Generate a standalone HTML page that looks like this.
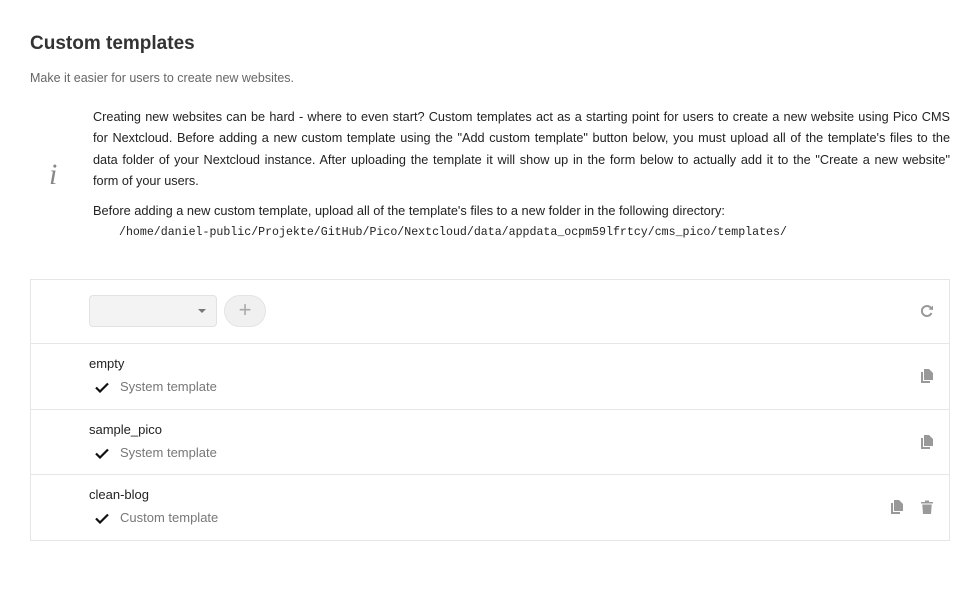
<!DOCTYPE html>
<html><head><style>
body{margin:0;background:#fff;font-family:"Liberation Sans",sans-serif;color:#222;width:980px;height:607px;overflow:hidden;position:relative}
h2{position:absolute;left:30px;top:33px;margin:0;font-size:19px;font-weight:bold;color:#333}
.sub{position:absolute;left:30px;top:71px;font-size:12.5px;color:#666}
.info{position:absolute;left:49px;top:158px;font-family:"Liberation Serif",serif;font-style:italic;font-size:30px;color:#888}
.p1{position:absolute;left:93px;top:107px;width:857px;font-size:12.7px;line-height:21.3px;color:#222}
.p1 div{text-align:justify;text-align-last:justify;white-space:nowrap}
.p1 div.l{text-align-last:left}
.p2{position:absolute;left:93px;top:203px;font-size:12.8px;color:#222}
.code{position:absolute;left:119px;top:226px;font-family:"Liberation Mono",monospace;font-size:11.6px;color:#222}
.box{position:absolute;left:30px;top:279px;width:918px;height:260px;border:1px solid #e6e6e6}
.row{position:absolute;left:0;width:918px;border-top:1px solid #e6e6e6}
.sel{position:absolute;left:58px;top:15px;width:128px;height:32px;background:#f3f3f3;border:1px solid #e2e2e2;border-radius:4px;box-sizing:border-box}
.sel:after{content:"";position:absolute;right:10px;top:13px;border:4px solid transparent;border-top:4px solid #777}
.add{position:absolute;left:193px;top:15px;width:42px;height:32px;border-radius:16px;background:#f0f0f0;border:1px solid #e4e4e4;box-sizing:border-box;color:#aaa;font-size:22px;text-align:center;line-height:28px}
.name{position:absolute;left:58px;top:12px;font-size:13px;color:#222}
.ty{position:absolute;left:89px;top:35px;font-size:13px;color:#777}
.ck{position:absolute;left:64px;top:38px}
.ic{position:absolute}
</style></head><body>
<h2>Custom templates</h2>
<div class="sub">Make it easier for users to create new websites.</div>
<div class="info">i</div>
<div class="p1">
<div>Creating new websites can be hard - where to even start? Custom templates act as a starting point for users to create a new website using Pico CMS</div>
<div>for Nextcloud. Before adding a new custom template using the "Add custom template" button below, you must upload all of the template's files to the</div>
<div>data folder of your Nextcloud instance. After uploading the template it will show up in the form below to actually add it to the "Create a new website"</div>
<div class="l">form of your users.</div>
</div>
<div class="p2">Before adding a new custom template, upload all of the template's files to a new folder in the following directory:</div>
<div class="code">/home/daniel-public/Projekte/GitHub/Pico/Nextcloud/data/appdata_ocpm59lfrtcy/cms_pico/templates/</div>
<div class="box">
 <div class="sel"></div><div class="add">+</div>
 <svg class="ic" style="left:889px;top:24px" width="14" height="14" viewBox="0 0 14 14"><path d="M11.5 5A5 5 0 1 0 11.5 9" fill="none" stroke="#999" stroke-width="2"/><path d="M8.5 5.5L13 1.5V6Z" fill="#999"/></svg>
 <div class="row" style="top:63px;height:65px"><div class="name">empty</div><svg class="ck" width="14" height="11"><path d="M1 5.5L5 9.5L13 1.5" fill="none" stroke="#111" stroke-width="2.2"/></svg><div class="ty">System template</div>
  <svg class="ic" style="left:890px;top:25px" width="12" height="14"><path d="M3 0H8L12 4V11H3Z" fill="#999"/><path d="M0 3H2V12H9V14H0Z" fill="#999"/></svg></div>
 <div class="row" style="top:129px;height:65px"><div class="name">sample_pico</div><svg class="ck" width="14" height="11"><path d="M1 5.5L5 9.5L13 1.5" fill="none" stroke="#111" stroke-width="2.2"/></svg><div class="ty">System template</div>
  <svg class="ic" style="left:890px;top:25px" width="12" height="14"><path d="M3 0H8L12 4V11H3Z" fill="#999"/><path d="M0 3H2V12H9V14H0Z" fill="#999"/></svg></div>
 <div class="row" style="top:194px;height:66px"><div class="name">clean-blog</div><svg class="ck" width="14" height="11"><path d="M1 5.5L5 9.5L13 1.5" fill="none" stroke="#111" stroke-width="2.2"/></svg><div class="ty">Custom template</div>
  <svg class="ic" style="left:860px;top:25px" width="12" height="14"><path d="M3 0H8L12 4V11H3Z" fill="#999"/><path d="M0 3H2V12H9V14H0Z" fill="#999"/></svg>
  <svg class="ic" style="left:890px;top:25px" width="12" height="14"><path d="M0 2H12V3.5H0Z M4 0.5H8V2H4Z" fill="#999"/><path d="M1.3 4.5H10.7L10 14H2Z" fill="#999"/></svg></div>
</div>
</body></html>
